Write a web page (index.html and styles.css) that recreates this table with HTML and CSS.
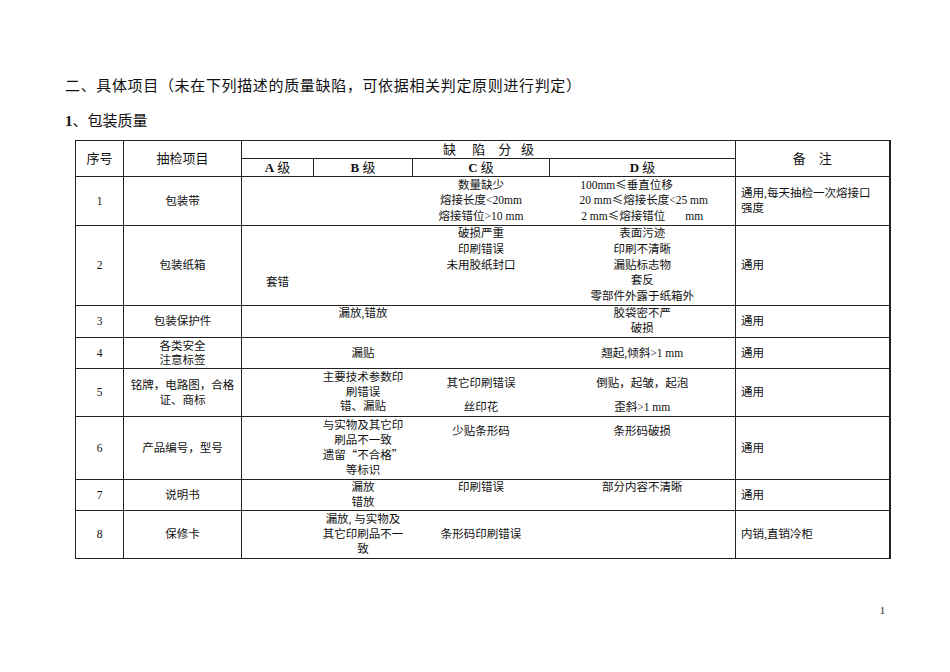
FILE: index.html
```html
<!DOCTYPE html>
<html lang="zh-CN">
<head>
<meta charset="utf-8">
<title>包装质量</title>
<link rel="stylesheet" href="styles.css">
</head>
<body>
<div class="page">
  <p class="h1">二<span class="fw">、</span>具体项目<span class="fw fr">（</span>未在下列描述的质量缺陷<span class="fw">，</span>可依据相关判定原则进行判定<span class="fw">）</span></p>
  <p class="h2"><b class="num">1</b><span class="fw">、</span>包装质量</p>
  <table class="tbl">
    <colgroup>
      <col class="w1"><col class="w2"><col class="w3"><col class="w4"><col class="w5"><col class="w6"><col class="w7">
    </colgroup>
    <tr class="hr1">
      <th rowspan="2" class="th">序号</th>
      <th rowspan="2" class="th">抽检项目</th>
      <th colspan="4" class="th grade">缺&nbsp;&nbsp;&nbsp;&nbsp;&nbsp;陷&nbsp;&nbsp;&nbsp;&nbsp;分&nbsp;&nbsp;&nbsp;级</th>
      <th rowspan="2" class="th">备&nbsp;&nbsp;&nbsp;&nbsp;注</th>
    </tr>
    <tr class="hr2">
      <th class="th sub"><b>A</b> 级</th>
      <th class="th sub"><b>B</b> 级</th>
      <th class="th sub"><b>C</b> 级</th>
      <th class="th sub"><b>D</b> 级</th>
    </tr>
    <tr class="r1">
      <td class="c">1</td>
      <td class="c">包装带</td>
      <td class="a"></td>
      <td class="b"></td>
      <td class="c mid ci l155">数量缺少<br>熔接长度&lt;20mm<br>熔接错位&gt;10 mm</td>
      <td class="d mid ci l155">100mm<span class="fw fc">≤</span>垂直位移&nbsp;&nbsp;&nbsp;&nbsp;&nbsp;&nbsp;&nbsp;&nbsp;&nbsp;&nbsp;&nbsp;<br>&nbsp;20 mm<span class="fw fc">≤</span>熔接长度&lt;25 mm<br>2 mm<span class="fw fc">≤</span>熔接错位&nbsp;&nbsp;&nbsp;&nbsp;&nbsp;&nbsp;&nbsp;mm</td>
      <td class="rm l155">通用,每天抽检一次熔接口<br>强度</td>
    </tr>
    <tr class="r2">
      <td class="c">2</td>
      <td class="c">包装纸箱</td>
      <td class="a top"><div class="taocuo">套错</div></td>
      <td class="b"></td>
      <td class="c top ci l16">破损严重<br>印刷错误<br>未用胶纸封口</td>
      <td class="d top ci l16">表面污迹<br>印刷不清晰<br>漏贴标志物<br>套反<br>零部件外露于纸箱外</td>
      <td class="rm">通用</td>
    </tr>
    <tr class="r3">
      <td class="c">3</td>
      <td class="c">包装保护件</td>
      <td class="a"></td>
      <td class="b top ci">漏放,错放</td>
      <td class="c"></td>
      <td class="d top ci">胶袋密不严<br>破损</td>
      <td class="rm">通用</td>
    </tr>
    <tr class="r4">
      <td class="c">4</td>
      <td class="c">各类安全<br>注意标签</td>
      <td class="a"></td>
      <td class="b c">漏贴</td>
      <td class="c"></td>
      <td class="d c">翘起,倾斜&gt;1 mm</td>
      <td class="rm">通用</td>
    </tr>
    <tr class="r5">
      <td class="c">5</td>
      <td class="c">铭牌<span class="fw">，</span>电路图<span class="fw">，</span>合格<br>证<span class="fw">、</span>商标</td>
      <td class="a"></td>
      <td class="b top ci p1">主要技术参数印<br>刷错误<br>错<span class="fw">、</span>漏贴</td>
      <td class="c top ci p7"><div class="ln">其它印刷错误</div><div class="ln gap">丝印花</div></td>
      <td class="d top ci p7"><div class="ln">倒贴<span class="fw">，</span>起皱<span class="fw">，</span>起泡</div><div class="ln gap">歪斜&gt;1 mm</div></td>
      <td class="rm">通用</td>
    </tr>
    <tr class="r6">
      <td class="c">6</td>
      <td class="c">产品编号<span class="fw">，</span>型号</td>
      <td class="a"></td>
      <td class="b top ci p1 l15">与实物及其它印<br>刷品不一致<br>遗留<span class="fw fr">“</span>不合格<span class="fw">”</span><br>等标识</td>
      <td class="c top ci p7">少贴条形码</td>
      <td class="d top ci p7">条形码破损</td>
      <td class="rm">通用</td>
    </tr>
    <tr class="r7">
      <td class="c">7</td>
      <td class="c">说明书</td>
      <td class="a"></td>
      <td class="b top ci l15">漏放<br>错放</td>
      <td class="c top ci">印刷错误</td>
      <td class="d top ci">部分内容不清晰</td>
      <td class="rm">通用</td>
    </tr>
    <tr class="r8">
      <td class="c">8</td>
      <td class="c">保修卡</td>
      <td class="a"></td>
      <td class="b top ci p1 l15">漏放, 与实物及<br>其它印刷品不一<br>致</td>
      <td class="c">条形码印刷错误</td>
      <td class="d"></td>
      <td class="rm">内销,直销冷柜</td>
    </tr>
  </table>
  <div class="pno">1</div>
</div>
</body>
</html>
```

FILE: styles.css
```css
html, body {
  margin: 0;
  padding: 0;
  background: #fff;
}
body {
  font-family: "Liberation Serif", "Noto Sans CJK SC", serif;
  color: #111;
}
.fw {
  font-family: "Noto Sans CJK SC", sans-serif;
  line-height: 0;
  display: inline-block;
  width: 1em;
  text-align: left;
  text-indent: 0;
}
.fw.fr {
  text-align: right;
}
.fw.fc {
  text-align: center;
}
.page {
  width: 950px;
  height: 672px;
  box-sizing: border-box;
  padding: 76px 0 0 65px;
}
.h1, .h2 {
  margin: 0;
  font-size: 15px;
  line-height: 20px;
  font-weight: normal;
}
.h1 {
  width: 516px;
  text-align: justify;
  text-align-last: justify;
  text-justify: inter-character;
}
.h2 {
  margin-top: 15px;
}
.num {
  font-weight: bold;
}
.tbl {
  margin: 9px 0 0 10px;
  border-collapse: collapse;
  table-layout: fixed;
  width: 814px;
  font-size: 11.5px;
  line-height: 14.5px;
  border-right: 2px solid #222;
  border-top: 1px solid #999;
}
.w1 { width: 48px; }
.w2 { width: 118px; }
.w3 { width: 72px; }
.w4 { width: 99px; }
.w5 { width: 137px; }
.w6 { width: 186px; }
.w7 { width: 154px; }
.tbl th, .tbl td {
  border: 1px solid #222;
  padding: 0;
  text-align: center;
  vertical-align: middle;
  overflow: visible;
  white-space: nowrap;
}
.tbl .th {
  font-weight: normal;
  font-size: 13px;
  line-height: 16px;
}
.tbl .th b {
  font-weight: bold;
}
.tbl tr > td.a + td.b,
.tbl tr > td.b + td.c,
.tbl tr > td.c + td.d {
  border-left-style: hidden;
}
.tbl td.a,
.tbl td.rm {
  border-left-style: solid;
}
.hr1 { height: 18px; }
.hr2 { height: 18px; }
.r1 { height: 49px; }
.r2 { height: 80px; }
.r3 { height: 32px; }
.r4 { height: 31px; }
.r5 { height: 48px; }
.r6 { height: 63px; }
.r7 { height: 31px; }
.r8 { height: 48px; }
.tbl td.top {
  vertical-align: top;
}
.tbl td.ci {
  text-align: center;
}
.tbl td.l16 {
  line-height: 15.8px;
}
.tbl td.l155 {
  line-height: 15.2px;
}
.tbl td.l15 {
  line-height: 15px;
}
.tbl td.p1 {
  padding-top: 1px;
}
.tbl td.p7 {
  padding-top: 7px;
}
.ln {
  line-height: 15px;
}
.ln.gap {
  margin-top: 9px;
}
.tbl td.rm {
  text-align: left;
  padding-left: 5px;
}
.taocuo {
  text-align: left;
  padding: 48px 0 0 24px;
  line-height: 16px;
}
.pno {
  width: 824px;
  margin-top: 46px;
  text-align: right;
  font-size: 10px;
  line-height: 12px;
  box-sizing: border-box;
  padding-right: 4px;
}
```
